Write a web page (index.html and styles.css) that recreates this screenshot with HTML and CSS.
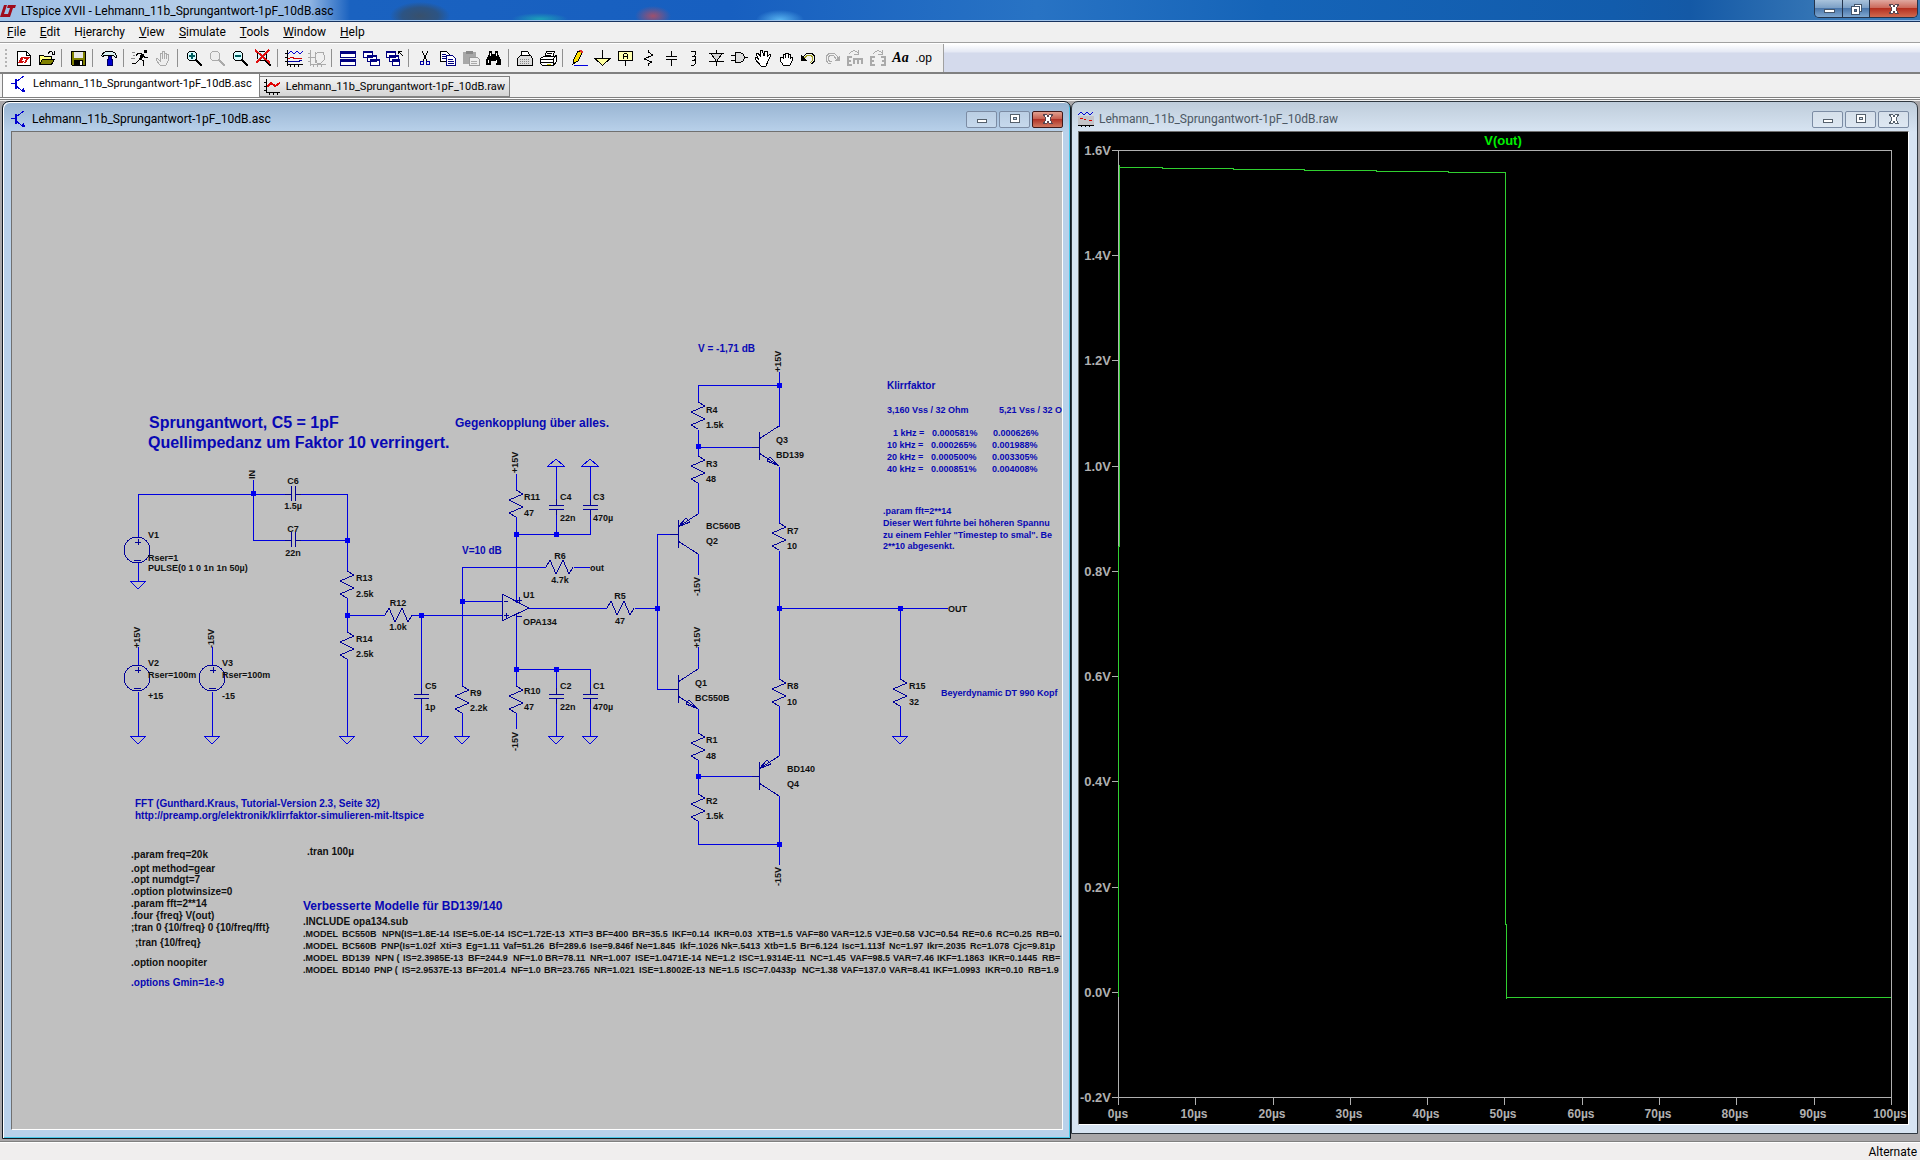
FILE: index.html
```html
<!DOCTYPE html>
<html lang="en">
<head>
<meta charset="utf-8">
<title>LTspice XVII - Lehmann_11b_Sprungantwort-1pF_10dB.asc</title>
<link rel="stylesheet" href="styles.css">
</head>
<body>
<header class="titlebar">
  <svg class="logo" viewBox="0 0 16 12"><path d="M4 0H7L4 9H8L7 12H0ZM8 0H16L15 3H13L10 12H7L10 3H7Z" fill="#a00c1c"/></svg>
  <h1 class="titlebar-text">LTspice XVII - Lehmann_11b_Sprungantwort-1pF_10dB.asc</h1>
  <div class="caption">
    <button class="cap cap-min" aria-label="Minimize"><svg viewBox="0 0 14 12"><path d="M2.500 6.500h10v3h-10z" fill="#fff" stroke="#44566c"/></svg></button>
    <button class="cap cap-restore" aria-label="Restore"><svg viewBox="0 0 14 12"><path d="M5.500 1.500h7v7h-7z" fill="#fff" stroke="#44566c"/><path d="M2.500 3.500h8v8h-8z" fill="#fff" stroke="#44566c"/><path d="M5.500 6.500h2v2h-2z" fill="#5a7ba4" stroke="#44566c"/></svg></button>
    <button class="cap cap-close" aria-label="Close"><svg viewBox="0 0 14 12"><path d="M2.500 1.500h3L7 3.500 8.500 1.500h3L9 6l2.500 4.500h-3L7 8.500 5.500 10.500h-3L5 6z" fill="#fff" stroke="#5a4650"/></svg></button>
  </div>
</header>

<nav class="menubar" aria-label="Main menu">
  <button><u>F</u>ile</button><button><u>E</u>dit</button><button>H<u>i</u>erarchy</button><button><u>V</u>iew</button><button><u>S</u>imulate</button><button><u>T</u>ools</button><button><u>W</u>indow</button><button><u>H</u>elp</button>
</nav>

<div class="toolrow">
  <div class="toolbar" role="toolbar" aria-label="Tools">
    <button aria-label="New schematic"><svg viewBox="0 0 18 18"><path d="M2.500 2.500h9l4 4v10h-13z" fill="#fff" stroke="#000"/><path d="M11.500 2.500v4h4" fill="none" stroke="#000"/><path d="M6 8h3l-2 4h2l-1 2H3zM9 8h6l-1 2h-1l-2 4H9l2-4H9z" fill="#d01010"/></svg></button>
    <button aria-label="Open"><svg viewBox="0 0 18 18"><path d="M1.500 15.500v-9h4l1 1h7v3" fill="#ffff80" stroke="#000"/><path d="M1.500 15.500l3-5h12l-3 5z" fill="#808000" stroke="#000"/><path d="M10 4.500q3-4 5 0M16.500 2v3h-3" fill="none" stroke="#000"/></svg></button>
    <i class="sep"></i>
    <button aria-label="Save"><svg viewBox="0 0 18 18"><path d="M2.500 2.500h14v14h-13l-1-1z" fill="#808000" stroke="#000"/><path d="M5 3h9v6H5z" fill="#e8e8e8"/><path d="M5 11h9v5H5z" fill="#000"/><path d="M11 12h2v4h-2z" fill="#fff"/></svg></button>
    <i class="sep"></i>
    <button aria-label="Control panel"><svg viewBox="0 0 18 18"><path d="M1.500 6.500q2-3 4-4h6q3 0 5 4v2h-1l-2-2h-9l-2 1z" fill="#d8f0f0" stroke="#000"/><path d="M8 7h3v3h1v6H7v-6h1z" fill="#0000d0" stroke="#000060"/></svg></button>
    <i class="sep"></i>
    <button aria-label="Run"><svg viewBox="0 0 18 18"><path d="M13 1h3v3h-3z" fill="#000"/><path d="M10 5h3l-2 6H8z" fill="#000"/><path d="M11 5L7 4 5 7M9 10l4 2-1 5M9 10l-4 4H1M12 6l2 3 3-1" fill="none" stroke="#000"/><path d="M1 3h3M2 6h2M0 9h4" stroke="#888"/></svg></button>
    <button aria-label="Halt" disabled><svg viewBox="0 0 18 18"><path d="M6 16l-4-5q0-2 2-1l2 2V4h2V2h2v2h2v1h2v7l-2 4z" fill="#eee" stroke="#aaa"/><path d="M8 4v6M10 4v6M12 5v5" stroke="#aaa"/></svg></button>
    <i class="sep"></i>
    <button aria-label="Zoom in"><svg viewBox="0 0 18 18"><circle cx="7" cy="7" r="5" fill="#d8fbff" stroke="#000"/><path d="M4 7h6M7 4v6" stroke="#006060" stroke-width="2"/><path d="M11 11l6 6" stroke="#000" stroke-width="2"/></svg></button>
    <button aria-label="Pan" disabled><svg viewBox="0 0 18 18"><circle cx="7" cy="7" r="5" fill="#eee" stroke="#aaa"/><path d="M11 11l6 6" stroke="#aaa" stroke-width="2"/></svg></button>
    <button aria-label="Zoom out"><svg viewBox="0 0 18 18"><circle cx="7" cy="7" r="5" fill="#d8fbff" stroke="#000"/><path d="M4 7h6" stroke="#006060" stroke-width="2"/><path d="M11 11l6 6" stroke="#000" stroke-width="2"/></svg></button>
    <button aria-label="Zoom to fit"><svg viewBox="0 0 18 18"><circle cx="8" cy="7" r="5" fill="#d8fbff" stroke="#000"/><path d="M11 11l6 6" stroke="#000" stroke-width="2"/><path d="M1 1l15 13M15 1L2 14" stroke="#e01010" stroke-width="2"/></svg></button>
    <i class="sep"></i>
    <button aria-label="Autorange"><svg viewBox="0 0 18 18"><path d="M2.500 1v16M0 4.500h2M0 8.500h2M0 12.500h2M2 15.500h16M5.500 15v3M9.500 15v3M13.500 15v3" fill="none" stroke="#000"/><path d="M3 5l3-3 3 3 3-3 3 3 3-3" fill="none" stroke="#0000d0"/><path d="M3 9.500l4-1 3 1h7" fill="none" stroke="#d00000"/><path d="M3 13l5-1 4 1 5-2" fill="none" stroke="#0000a0"/></svg></button>
    <button aria-label="Plot settings" disabled><svg viewBox="0 0 18 18"><path d="M2.500 1v16M0 4.500h2M0 8.500h2M0 12.500h2M2 15.500h16M5.500 15v3M9.500 15v3M13.500 15v3" fill="none" stroke="#aaa"/><path d="M3 8.500h4M7.500 3v11M7 5l4-2h4l1 3v5l-3 3H9l-1-3" fill="none" stroke="#aaa"/></svg></button>
    <i class="sep"></i>
    <button aria-label="Tile windows"><svg viewBox="0 0 18 18"><path d="M1.500 2.500h15v6h-15zM1.500 10.500h15v6h-15z" fill="#fff" stroke="#000080"/><path d="M1 2h16v3H1zM1 10h16v3H1z" fill="#000080"/></svg></button>
    <button aria-label="Cascade windows"><svg viewBox="0 0 18 18"><g fill="#fff" stroke="#000080"><path d="M1.500 2.500h9v6h-9zM5.500 6.500h9v6h-9zM8.500 10.500h9v6h-9z"/></g><path d="M1 2h10v2H1zM5 6h10v2H5zM8 10h10v2H8z" fill="#000080"/></svg></button>
    <button aria-label="Close windows"><svg viewBox="0 0 18 18"><g fill="#fff" stroke="#000080"><path d="M1.500 2.500h9v6h-9zM4.500 6.500h9v6h-9zM7.500 10.500h7v6h-7z"/></g><path d="M1 2h10v2H1zM4 6h10v2H4zM7 10h8v2H7z" fill="#000080"/><path d="M13.500 5V2.500H17M14 3l4 4" fill="none" stroke="#000"/></svg></button>
    <i class="sep"></i>
    <button aria-label="Cut"><svg viewBox="0 0 18 18"><path d="M6 2l5 10M12 2L7 12" stroke="#000" fill="none"/><circle cx="6" cy="14" r="2" fill="none" stroke="#0000a0"/><circle cx="12" cy="14" r="2" fill="none" stroke="#0000a0"/></svg></button>
    <button aria-label="Copy"><svg viewBox="0 0 18 18"><path d="M1.500 2.500h6l3 3v7h-9z" fill="#fff" stroke="#000"/><path d="M3 5.500h4M3 7.500h4M3 9.500h4" stroke="#000080"/><path d="M7.500 6.500h6l3 3v7h-9z" fill="#fff" stroke="#000080"/><path d="M9 10.500h5M9 12.500h6M9 14.500h6" stroke="#000080"/></svg></button>
    <button aria-label="Paste" disabled><svg viewBox="0 0 18 18"><path d="M1 3h13v12H1z" fill="#a8a8a8"/><path d="M4 2h7v3H4z" fill="#888"/><path d="M7.500 8.500h8l2 2v6h-10z" fill="#eee" stroke="#999"/><path d="M9 12.500h6M9 14.500h6" stroke="#aaa"/></svg></button>
    <button aria-label="Find"><svg viewBox="0 0 18 18"><path d="M4 2h3v3h3V2h3v3l3 6v5h-5v-4H6v4H1v-5l3-6z" fill="#000"/><path d="M3.500 11v3M11.500 11v3M5.500 4v3M11.500 4v3" stroke="#fff"/></svg></button>
    <i class="sep"></i>
    <button aria-label="Print setup"><svg viewBox="0 0 18 18"><path d="M5.500 7.500v-5h6l2 3v2" fill="#fff" stroke="#000"/><path d="M1.500 9.500l3-3h10l2 3v7h-15z" fill="#ddd" stroke="#000"/><path d="M4 10.500h10M4 12.500h10M4 14.500h10" stroke="#888" stroke-dasharray="1 1"/></svg></button>
    <button aria-label="Print"><svg viewBox="0 0 18 18"><path d="M5.500 8.500l2-6h8l-2 6" fill="#fff" stroke="#000"/><path d="M8 4.500h5M7 6.500h5" stroke="#000"/><path d="M1.500 9.500l3-2h11l2-1v6l-3 4h-11l-2-2z" fill="#fff" stroke="#000"/><path d="M2 10.500h12v6M2 13.500h12M14 10l3-3" fill="none" stroke="#000"/><path d="M8 15h4" stroke="#c0c000"/></svg></button>
    <i class="sep"></i>
    <button aria-label="Wire"><svg viewBox="0 0 18 18"><path d="M3 15l1-5 4-8h3l1 2-4 8z" fill="#ffe000" stroke="#000"/><path d="M2 16l2-3 2 1z" fill="#000"/><path d="M9 1h3l1 2-1 1-3-2z" fill="#e03030"/><path d="M4 16.500h14" stroke="#0000e0"/></svg></button>
    <button aria-label="Ground"><svg viewBox="0 0 18 18"><path d="M9.500 1v8" stroke="#000"/><path d="M2 9.500h15l-7.500 7z" fill="#ffffa0" stroke="#000"/></svg></button>
    <button aria-label="Label net"><svg viewBox="0 0 18 18"><path d="M2.500 2.500h14v9h-14z" fill="#ffffb0" stroke="#000"/><path d="M9.500 12v5" stroke="#000"/><path d="M7.500 10V5.500l1-1h2l1 1V10M7.500 7.500h4" fill="none" stroke="#000"/></svg></button>
    <button aria-label="Resistor"><svg viewBox="0 0 18 18"><path d="M9 1v2l5 3-9 4 8 3-4 2v2" fill="none" stroke="#000"/></svg></button>
    <button aria-label="Capacitor"><svg viewBox="0 0 18 18"><path d="M9.500 2v5M9.500 11v6M4 7.500h11M4 10.500h11" fill="none" stroke="#000"/></svg></button>
    <button aria-label="Inductor"><svg viewBox="0 0 18 18"><path d="M6 2h3q4 2 0 5H7M9 7q4 2 0 4H7M9 11q4 2 0 5H6" fill="none" stroke="#000"/></svg></button>
    <button aria-label="Diode"><svg viewBox="0 0 18 18"><path d="M1 4.500h15M1 12.500h15M8.500 1v3M8.500 12v5" stroke="#000"/><path d="M3 4.500h11l-5.500 8z" fill="#d4d4d4" stroke="#000"/></svg></button>
    <button aria-label="Component"><svg viewBox="0 0 18 18"><path d="M0 6.500h4M0 11.500h4M13 8.500h4" stroke="#000"/><path d="M4.500 3.500h5l3 2 1 3-1 3-3 2h-5z" fill="#ddd" stroke="#000"/></svg></button>
    <button aria-label="Move"><svg viewBox="0 0 18 18"><path d="M7 17l-6-7q0-2 2-1l2 2-3-6 2-1 3 4-1-6 2-1 2 6 1-5h2v6l3-3 1 1-3 6-2 5z" fill="#fff" stroke="#000"/></svg></button>
    <button aria-label="Drag"><svg viewBox="0 0 18 18"><path d="M6 16l-3-5V8l3 1V5h2v2-3h3v3-2h2v3h2v4l-2 4z" fill="#fff" stroke="#000"/><path d="M8.500 5v4M11.500 5v4M13.500 7v3" stroke="#000"/></svg></button>
    <button aria-label="Undo"><svg viewBox="0 0 18 18"><path d="M3 9q2-5 7-5 5 1 5 6-1 4-4 5" fill="none" stroke="#000"/><path d="M4 10q2-4 6-4 3 1 3 4-1 3-3 4" fill="none" stroke="#a0a020"/><path d="M1 6v6h6z" fill="#000"/></svg></button>
    <button aria-label="Redo" disabled><svg viewBox="0 0 18 18"><path d="M15 9q-2-5-7-5-5 1-5 6 1 5 5 5" fill="none" stroke="#aaa"/><path d="M13 10q-2-4-5-4-3 1-3 4 1 3 4 3" fill="none" stroke="#aaa"/><path d="M17 6v6h-6z" fill="#aaa"/></svg></button>
    <button aria-label="Mirror" disabled><svg viewBox="0 0 18 18"><path d="M3 5q5-6 9-1M12.500 1v4H8" fill="none" stroke="#aaa"/><path d="M6 8H2v8h4M2 12h3M8 9v6M8 10h9M12 10v5M16 10v5" fill="none" stroke="#aaa" stroke-width="2"/></svg></button>
    <button aria-label="Rotate" disabled><svg viewBox="0 0 18 18"><path d="M4 5q5-6 9-1M13.500 1v4H9" fill="none" stroke="#aaa"/><path d="M6 8H2v8h4M2 12h3M12 8h4v8h-4M16 12h-3" fill="none" stroke="#aaa" stroke-width="2"/></svg></button>
    <button class="tool-text" aria-label="Text">Aa</button>
    <button class="tool-op" aria-label="SPICE directive">.op</button>
  </div>
</div>

<div class="tabs" role="tablist">
  <button class="tab tab-active" role="tab" aria-selected="true"><svg class="ico" viewBox="0 0 16 16"><path d="M0 7h4M13 0L5 6M5 10l8 6" stroke="#0000d0" fill="none"/><path d="M4 3h2v10H4zM9 15l5 1-1-4z" fill="#0000d0"/></svg>Lehmann_11b_Sprungantwort-1pF_10dB.asc</button>
  <button class="tab" role="tab" aria-selected="false"><svg class="ico" viewBox="0 0 16 16"><path d="M2.500 0v14M0 3.500h2M0 7.500h2M0 11.500h2M2 13.500h14M5.500 13v3M9.500 13v3M13.500 13v3" stroke="#000" fill="none"/><path d="M3 8l4-4 4 3 5-3" stroke="#e00000" stroke-width="2" fill="none"/></svg>Lehmann_11b_Sprungantwort-1pF_10dB.raw</button>
</div>

<main class="mdi">
  <section class="win win-active">
    <header class="win-title">
      <svg class="ico" viewBox="0 0 16 16"><path d="M0 7h4M13 0L5 6M5 10l8 6" stroke="#0000d0" fill="none"/><path d="M4 3h2v10H4zM9 15l5 1-1-4z" fill="#0000d0"/></svg>
      <h2>Lehmann_11b_Sprungantwort-1pF_10dB.asc</h2>
      <button class="wbtn" aria-label="Minimize"><svg viewBox="0 0 14 12"><path d="M2.500 6.500h9v3h-9z" fill="#fff" stroke="#55606c"/></svg></button>
      <button class="wbtn" aria-label="Maximize"><svg viewBox="0 0 14 12"><path d="M2.500 1.500h9v8h-9z" fill="#fff" stroke="#55606c"/><path d="M5.500 4.500h3v2h-3z" fill="#b9d1ea" stroke="#55606c"/></svg></button>
      <button class="wbtn wbtn-close" aria-label="Close"><svg viewBox="0 0 14 12"><path d="M2.500 1.500h3L7 3.500 8.500 1.500h3L9 6l2.500 4.500h-3L7 8.500 5.500 10.500h-3L5 6z" fill="#fff" stroke="#5a4650"/></svg></button>
    </header>
    <div class="client schematic">
      <svg role="img" aria-label="Schematic">
        <defs>
          <path id="res" d="M0 0L7 4L-7 10L7 17L-7 23L0 27"/>
          <path id="cap" d="M-7 0H8M-7 4H8M0 -6V0M0 4V10"/>
          <path id="gnd" d="M-8 0H8L0 8Z"/>
          <path id="rail" d="M-8 0H8L0 -7Z"/>
          <g id="src"><circle r="13"/><path d="M-2 -8H4M1 -11V-5M-3 10H4"/></g>
          <path id="npn" d="M0 -14V14M0 -7L20 -20M0 7L20 20L8 15L11 11L20 20"/>
          <path id="pnp" d="M0 -14V14M0 7L20 20M20 -20L0 -7L8 -16L12 -12L0 -7"/>
        </defs>
        <g transform="translate(-12 -133)">
          <path class="wire" d="M138 538V495H285M301 495H347V572M253 481V541H285M301 541H347M138 564V582M347 599V633M347 660V737M347 616H385M412 616H502M421 616V689M421 705V737
            M546 568H462V687M462 714V737M574 568H590M462 602H502M516 475V491M516 518V604M516 614V687M516 714V730M516 535H590V516M590 500V467M556 535V516M556 500V467M516 670H590V689M590 705V737M556 670V689M556 705V737
            M529 609H607M635 609H657M670 535H657V690H670M698 403V386H779M698 431V457M698 484V515M698 555V576M698 648V670M698 710V734M698 761V795M698 822V845H779M698 448H752M698 777H752
            M779 373V428M779 468V524M779 552V680M779 707V757M779 797V866M779 609H948M900 609V680M900 707V737M138 648V666M138 693V737M212 648V666M212 693V737"/>
          <g class="part">
            <use href="#res" x="347" y="572"/><use href="#res" x="347" y="633"/><use href="#res" x="516" y="491"/><use href="#res" x="516" y="687"/><use href="#res" x="462" y="687"/><use href="#res" x="698" y="403"/><use href="#res" x="698" y="457"/><use href="#res" x="779" y="524"/><use href="#res" x="779" y="680"/><use href="#res" x="698" y="734"/><use href="#res" x="698" y="795"/><use href="#res" x="900" y="680"/>
            <use href="#res" transform="translate(385 616) rotate(-90)"/><use href="#res" transform="translate(546 568) rotate(-90)"/><use href="#res" transform="translate(607 609) rotate(-90)"/>
            <use href="#cap" x="556" y="506"/><use href="#cap" x="590" y="506"/><use href="#cap" x="556" y="695"/><use href="#cap" x="590" y="695"/><use href="#cap" x="421" y="695"/>
            <use href="#cap" transform="translate(291 495) rotate(-90)"/><use href="#cap" transform="translate(291 541) rotate(-90)"/>
            <use href="#src" x="137" y="551"/><use href="#src" x="137" y="679"/><use href="#src" x="212" y="679"/>
            <use href="#pnp" x="678" y="535"/><use href="#npn" x="678" y="690"/><use href="#npn" x="759" y="447"/><use href="#pnp" x="759" y="777"/>
            <path d="M670 535H678M670 690H678M752 448H759M752 777H759M502 595V622L529 609ZM504 602H508M504 616H509M506 614V619M517 601H522M519 598V604M516 617H522"/>
          </g>
          <g class="flag">
            <use href="#gnd" x="138" y="582"/><use href="#gnd" x="138" y="737"/><use href="#gnd" x="212" y="737"/><use href="#gnd" x="347" y="737"/><use href="#gnd" x="421" y="737"/><use href="#gnd" x="462" y="737"/><use href="#gnd" x="556" y="737"/><use href="#gnd" x="590" y="737"/><use href="#gnd" x="900" y="737"/><use href="#rail" x="556" y="467"/><use href="#rail" x="590" y="467"/>
          </g>
          <path class="node" d="M251 492h5v5h-5zM345 539h5v5h-5zM345 614h5v5h-5zM419 614h5v5h-5zM460 600h5v5h-5zM514 533h5v5h-5zM554 533h5v5h-5zM514 668h5v5h-5zM554 668h5v5h-5zM655 607h5v5h-5zM696 445h5v5h-5zM777 384h5v5h-5zM777 607h5v5h-5zM898 607h5v5h-5zM696 775h5v5h-5zM777 843h5v5h-5z"/>
          <g class="label">
            <text x="148" y="539">V1</text><text x="148" y="562">Rser=1</text><text x="148" y="572">PULSE(0 1 0 1n 1n 50µ)</text>
            <text x="148" y="667">V2</text><text x="148" y="679">Rser=100m</text><text x="148" y="700">+15</text>
            <text x="222" y="667">V3</text><text x="222" y="679">Rser=100m</text><text x="222" y="700">-15</text>
            <text x="356" y="582">R13</text><text x="356" y="598">2.5k</text><text x="356" y="643">R14</text><text x="356" y="658">2.5k</text>
            <text x="524" y="501">R11</text><text x="524" y="517">47</text><text x="560" y="501">C4</text><text x="560" y="522">22n</text><text x="593" y="501">C3</text><text x="593" y="522">470µ</text>
            <text x="590" y="572">out</text><text x="523" y="599">U1</text><text x="523" y="626">OPA134</text>
            <text x="425" y="690">C5</text><text x="425" y="711">1p</text><text x="470" y="697">R9</text><text x="470" y="712">2.2k</text><text x="524" y="695">R10</text><text x="524" y="711">47</text>
            <text x="560" y="690">C2</text><text x="560" y="711">22n</text><text x="593" y="690">C1</text><text x="593" y="711">470µ</text>
            <text x="706" y="414">R4</text><text x="706" y="429">1.5k</text><text x="706" y="468">R3</text><text x="706" y="483">48</text><text x="776" y="444">Q3</text><text x="776" y="459">BD139</text>
            <text x="706" y="530">BC560B</text><text x="706" y="545">Q2</text><text x="787" y="535">R7</text><text x="787" y="550">10</text><text x="695" y="687">Q1</text><text x="695" y="702">BC550B</text>
            <text x="787" y="690">R8</text><text x="787" y="706">10</text><text x="706" y="744">R1</text><text x="706" y="760">48</text><text x="706" y="805">R2</text><text x="706" y="820">1.5k</text>
            <text x="787" y="773">BD140</text><text x="787" y="788">Q4</text><text x="948" y="613">OUT</text><text x="909" y="690">R15</text><text x="909" y="706">32</text>
            <g class="mid">
              <text x="293" y="485">C6</text><text x="293" y="510">1.5µ</text><text x="293" y="533">C7</text><text x="293" y="557">22n</text><text x="398" y="607">R12</text><text x="398" y="631">1.0k</text><text x="560" y="560">R6</text><text x="560" y="584">4.7k</text><text x="620" y="600">R5</text><text x="620" y="625">47</text>
            </g>
            <text transform="translate(518 474) rotate(-90)">+15V</text><text transform="translate(518 752) rotate(-90)">-15V</text><text transform="translate(140 649) rotate(-90)">+15V</text><text transform="translate(214 649) rotate(-90)">-15V</text><text transform="translate(255 480) rotate(-90)">IN</text>
            <text transform="translate(781 373) rotate(-90)">+15V</text><text transform="translate(700 597) rotate(-90)">-15V</text><text transform="translate(700 649) rotate(-90)">+15V</text><text transform="translate(781 887) rotate(-90)">-15V</text>
            <text y="938"><tspan x="303">.MODEL </tspan><tspan x="342">BC550B </tspan><tspan x="382">NPN(IS=1.8E-14 </tspan><tspan x="453">ISE=5.0E-14 </tspan><tspan x="508">ISC=1.72E-13 </tspan><tspan x="569">XTI=3 </tspan><tspan x="596">BF=400 </tspan><tspan x="632">BR=35.5 </tspan><tspan x="672">IKF=0.14 </tspan><tspan x="714">IKR=0.03 </tspan><tspan x="757">XTB=1.5 </tspan><tspan x="796">VAF=80 </tspan><tspan x="831">VAR=12.5 </tspan><tspan x="875">VJE=0.58 </tspan><tspan x="918">VJC=0.54 </tspan><tspan x="962">RE=0.6 </tspan><tspan x="996">RC=0.25 </tspan><tspan x="1036">RB=0.</tspan></text>
            <text y="950"><tspan x="303">.MODEL </tspan><tspan x="342">BC560B </tspan><tspan x="381">PNP(Is=1.02f </tspan><tspan x="440">Xti=3 </tspan><tspan x="466">Eg=1.11 </tspan><tspan x="503">Vaf=51.26 </tspan><tspan x="549">Bf=289.6 </tspan><tspan x="590">Ise=9.846f </tspan><tspan x="636">Ne=1.845 </tspan><tspan x="680">Ikf=.1026 </tspan><tspan x="721">Nk=.5413 </tspan><tspan x="764">Xtb=1.5 </tspan><tspan x="800">Br=6.124 </tspan><tspan x="842">Isc=1.113f </tspan><tspan x="889">Nc=1.97 </tspan><tspan x="927">Ikr=.2035 </tspan><tspan x="970">Rc=1.078 </tspan><tspan x="1013">Cjc=9.81p</tspan></text>
            <text y="962"><tspan x="303">.MODEL </tspan><tspan x="342">BD139 </tspan><tspan x="375">NPN ( </tspan><tspan x="403">IS=2.3985E-13 </tspan><tspan x="468">BF=244.9 </tspan><tspan x="513">NF=1.0 </tspan><tspan x="545">BR=78.11 </tspan><tspan x="590">NR=1.007 </tspan><tspan x="635">ISE=1.0471E-14 </tspan><tspan x="705">NE=1.2 </tspan><tspan x="739">ISC=1.9314E-11 </tspan><tspan x="810">NC=1.45 </tspan><tspan x="850">VAF=98.5 </tspan><tspan x="893">VAR=7.46 </tspan><tspan x="937">IKF=1.1863 </tspan><tspan x="989">IKR=0.1445 </tspan><tspan x="1042">RB=</tspan></text>
            <text y="974"><tspan x="303">.MODEL </tspan><tspan x="342">BD140 </tspan><tspan x="374">PNP ( </tspan><tspan x="402">IS=2.9537E-13 </tspan><tspan x="466">BF=201.4 </tspan><tspan x="511">NF=1.0 </tspan><tspan x="544">BR=23.765 </tspan><tspan x="594">NR=1.021 </tspan><tspan x="639">ISE=1.8002E-13 </tspan><tspan x="709">NE=1.5 </tspan><tspan x="743">ISC=7.0433p </tspan><tspan x="802">NC=1.38 </tspan><tspan x="841">VAF=137.0 </tspan><tspan x="889">VAR=8.41 </tspan><tspan x="933">IKF=1.0993 </tspan><tspan x="985">IKR=0.10 </tspan><tspan x="1028">RB=1.9</tspan></text>
          </g>
          <g class="directive">
            <text x="131" y="859">.param freq=20k</text><text x="131" y="873">.opt method=gear</text><text x="131" y="884">.opt numdgt=7</text><text x="131" y="896">.option plotwinsize=0</text><text x="131" y="908">.param fft=2**14</text><text x="131" y="920">.four {freq} V(out)</text><text x="131" y="932">;tran 0 {10/freq} 0 {10/freq/fft}</text><text x="135" y="947">;tran {10/freq}</text><text x="131" y="967">.option noopiter</text>
            <text x="307" y="856">.tran 100µ</text><text x="303" y="926">.INCLUDE opa134.sub</text>
          </g>
          <g class="note">
            <text x="131" y="987">.options Gmin=1e-9</text>
            <text x="135" y="808">FFT (Gunthard.Kraus, Tutorial-Version 2.3, Seite 32)</text><text x="135" y="820">http://preamp.org/elektronik/klirrfaktor-simulieren-mit-ltspice</text>
            <text x="698" y="353">V = -1,71 dB</text><text x="462" y="555">V=10 dB</text>
            <text x="887" y="390">Klirrfaktor</text>
          </g>
          <g class="note figures">
            <text x="883" y="515">.param fft=2**14</text><text x="883" y="527">Dieser Wert führte bei höheren Spannu</text><text x="883" y="539">zu einem Fehler "Timestep to smal". Be</text><text x="883" y="550">2**10 abgesenkt.</text>
            <text x="941" y="697">Beyerdynamic DT 990 Kopf</text>
            <text x="887" y="414">3,160 Vss / 32 Ohm</text><text x="999" y="414">5,21 Vss / 32 O</text>
            <text x="893" y="437">1 kHz =</text><text x="932" y="437">0.000581%</text><text x="993" y="437">0.000626%</text>
            <text x="887" y="449">10 kHz =</text><text x="931" y="449">0.000265%</text><text x="992" y="449">0.001988%</text>
            <text x="887" y="461">20 kHz =</text><text x="931" y="461">0.000500%</text><text x="992" y="461">0.003305%</text>
            <text x="887" y="473">40 kHz =</text><text x="931" y="473">0.000851%</text><text x="992" y="473">0.004008%</text>
          </g>
          <g class="note heading"><text x="149" y="429">Sprungantwort, C5 = 1pF</text><text x="148" y="449">Quellimpedanz um Faktor 10 verringert.</text></g>
          <g class="note subheading"><text x="455" y="428">Gegenkopplung über alles.</text><text x="303" y="911">Verbesserte Modelle für BD139/140</text></g>
        </g>
      </svg>
    </div>
  </section>

  <section class="win win-back">
    <header class="win-title">
      <svg class="ico" viewBox="0 0 16 16"><path d="M0 5h16v9H0z" fill="#c4c4c8"/><path d="M0 4l3-3 3 3 3-3 3 3 3-3" stroke="#0000d0" fill="none"/><path d="M2 7.500h3M6 8.500h2M11 9.500h3" stroke="#e00000"/><path d="M0 14h16M3.500 14v2M7.500 14v2M11.500 14v2" stroke="#000"/></svg>
      <h2>Lehmann_11b_Sprungantwort-1pF_10dB.raw</h2>
      <button class="wbtn" aria-label="Minimize"><svg viewBox="0 0 14 12"><path d="M2.500 6.500h9v3h-9z" fill="#fff" stroke="#55606c"/></svg></button>
      <button class="wbtn" aria-label="Maximize"><svg viewBox="0 0 14 12"><path d="M2.500 1.500h9v8h-9z" fill="#fff" stroke="#55606c"/><path d="M5.500 4.500h3v2h-3z" fill="#d7e4f2" stroke="#55606c"/></svg></button>
      <button class="wbtn" aria-label="Close"><svg viewBox="0 0 14 12"><path d="M2.500 1.500h3L7 3.500 8.500 1.500h3L9 6l2.500 4.500h-3L7 8.500 5.500 10.500h-3L5 6z" fill="#fff" stroke="#55606c"/></svg></button>
    </header>
    <div class="client plot">
      <svg role="img" aria-label="V(out) over time">
        <g transform="translate(-1079 -133)">
          <path class="axis" d="M1118 151H1891V1098H1118ZM1112 151h6M1112 256h6M1112 361h6M1112 467h6M1112 572h6M1112 677h6M1112 782h6M1112 888h6M1112 993h6M1112 1098h6M1118 1098v8M1195 1098v8M1273 1098v8M1350 1098v8M1427 1098v8M1504 1098v8M1582 1098v8M1659 1098v8M1736 1098v8M1814 1098v8M1891 1098v8"/>
          <path class="trace" d="M1118 998V547H1119V166M1119 168H1162V169H1233V170H1304V171H1376V172H1448V173H1505V925H1506V1000V998H1891"/>
          <text class="trace-name" x="1503" y="146">V(out)</text>
          <g class="ylab">
            <text x="1111" y="156">1.6V</text><text x="1111" y="261">1.4V</text><text x="1111" y="366">1.2V</text><text x="1111" y="472">1.0V</text><text x="1111" y="577">0.8V</text><text x="1111" y="682">0.6V</text><text x="1111" y="787">0.4V</text><text x="1111" y="893">0.2V</text><text x="1111" y="998">0.0V</text><text x="1111" y="1103">-0.2V</text>
          </g>
          <g class="xlab">
            <text x="1118" y="1119">0µs</text><text x="1194" y="1119">10µs</text><text x="1272" y="1119">20µs</text><text x="1349" y="1119">30µs</text><text x="1426" y="1119">40µs</text><text x="1503" y="1119">50µs</text><text x="1581" y="1119">60µs</text><text x="1658" y="1119">70µs</text><text x="1735" y="1119">80µs</text><text x="1813" y="1119">90µs</text><text x="1890" y="1119">100µs</text>
          </g>
        </g>
      </svg>
    </div>
  </section>
</main>

<footer class="status">Alternate</footer>
</body>
</html>
```
FILE: styles.css
```css
* { box-sizing: border-box; }
body {
  margin: 0;
  height: 100vh;
  display: flex;
  flex-direction: column;
  overflow: hidden;
  background: #f0f0f0;
  color: #000;
  font: 12px/16px Roboto, "Noto Sans", sans-serif;
}
button { font: inherit; color: inherit; border: 0; padding: 0; margin: 0; background: none; }
h1, h2 { margin: 0; font: inherit; }
svg { display: block; shape-rendering: crispEdges; }

/* main title bar */
.titlebar {
  height: 22px;
  flex: none;
  display: flex;
  align-items: flex-start;
  padding: 0 2px 0 0;
  border-bottom: 1px solid #17335f;
  box-shadow: inset 0 -1px #9fc3ea;
  background:
    radial-gradient(ellipse 24px 10px at 780px 20px, #58b4f0, transparent),
    radial-gradient(ellipse 18px 10px at 653px 16px, #a0506c, transparent),
    radial-gradient(ellipse 28px 6px at 540px 19px, #1ca0b8, transparent),
    radial-gradient(ellipse 30px 14px at 420px 16px, #38506c, #2c5484 60%, transparent),
    linear-gradient(90deg, #9dbfe6 0, #b4cde8 180px, #8fb4e2 310px, #1a62c0 350px, #175fc0 38%, #2873c4 54%, #1564b8 66%, #125cac 84%, #1459a6 88%, #3a7ab8 96%);
}
.logo { width: 16px; height: 12px; margin: 5px 5px 0 0; shape-rendering: auto; }
.titlebar-text { flex: 1; line-height: 22px; }
.caption { display: flex; height: 18px; border: 1px solid #24344c; border-top: 0; border-radius: 0 0 5px 5px; overflow: hidden; }
.cap { display: flex; align-items: center; justify-content: center; width: 27px; background: linear-gradient(#a9c3dc, #7da0c6 45%, #4b77ab 50%, #7fa7d0); }
.cap + .cap { border-left: 1px solid #24344c; }
.cap svg, .wbtn svg { width: 14px; height: 12px; }
.cap-close { width: 48px; background: linear-gradient(#e0a8a0, #cc6a5c 45%, #b53020 50%, #d06a50); }

.menubar { height: 21px; flex: none; display: flex; border-bottom: 1px solid #a0a0a0; }
.menubar button { padding: 0 7px; line-height: 20px; }

/* toolbar */
.toolrow { height: 31px; flex: none; display: flex; border-top: 1px solid #fff; border-bottom: 2px solid #808080; background: linear-gradient(#fff, #e4e8f4 8px, #d4daec 9px); }
.toolbar { position: relative; display: flex; padding: 0 8px 0 12px; background: #f0f0f0; border-right: 1px solid #a0a0a0; }
.toolbar::before { content: ""; position: absolute; left: 5px; top: 5px; bottom: 5px; border-left: 2px dotted #b4b4b4; }
.toolbar button { width: 23px; display: flex; align-items: center; justify-content: center; }
.toolbar svg { width: 18px; height: 18px; }
.sep { width: 8px; margin: 5px 0; background: linear-gradient(#909090, #909090) 3px 0 / 1px 100% no-repeat; }
.toolbar .tool-text { font: italic bold 14px "Liberation Serif", serif; }
.toolbar .tool-op { font: 12px "Liberation Sans", sans-serif; }

/* document tabs */
.tabs { height: 24px; flex: none; display: flex; align-items: flex-end; padding-left: 2px; border-bottom: 1px solid #808080; box-shadow: 0 1px #fff, 0 2px #808080; margin-bottom: 3px; font-size: 11px; }
.tab { display: flex; align-items: center; gap: 6px; height: 21px; padding: 0 4px; border: 1px solid #808080; border-left: 0; background: linear-gradient(#f4f4f4, #d4d4d4); }
.tab-active { height: 24px; padding: 0 7px 3px 8px; background: #fff; border-left: 1px solid #808080; border-bottom: 0; }
.ico { width: 16px; height: 16px; flex: none; }

/* child windows */
.mdi { flex: 1; min-height: 0; display: grid; grid-template-columns: 1069fr 847fr; padding: 0 2px 2px; background: #a9a7a9; }
.win { display: flex; flex-direction: column; min-width: 0; min-height: 0; border: 1px solid #303840; border-radius: 7px 7px 0 0; }
.win-active { border-color: #101820; background: linear-gradient(#98b4d2, #b9d1ea 30px); box-shadow: inset 1px 1px #fff, inset -1px -1px #48c8e8; padding: 0 7px 8px 8px; }
.win-back { margin-bottom: 5px; background: linear-gradient(#bfcddb, #d7e4f2 30px); color: #4c5864; padding: 0 8px 8px 6px; }
.win-title { height: 29px; flex: none; display: flex; align-items: center; padding-top: 5px; gap: 2px; }
.win-title h2 { flex: 1; padding-left: 3px; line-height: 16px; }
.wbtn { width: 31px; height: 17px; display: flex; align-items: center; justify-content: center; border: 1px solid #7c8ca4; border-radius: 2px; background: rgba(255, 255, 255, .25); }
.wbtn-close { border-color: #401818; background: linear-gradient(#e0a090, #c86050 45%, #b03428 50%, #d07860); }
.client { flex: 1; min-height: 0; overflow: hidden; border: 1px solid #707070; border-right-color: #fff; border-bottom-color: #fff; }
.client svg { width: 100%; height: 100%; }
.schematic { background: #c0c0c0; }
.plot { background: #000; }
.client text { font-family: "Liberation Sans", Arial, sans-serif; font-weight: bold; white-space: pre; }

.wire, .flag { fill: none; stroke: #0000e0; }
.part { fill: none; stroke: #000098; }
.node { fill: #0000f0; }
.label { font-size: 9px; fill: #101010; }
.mid, .xlab { text-anchor: middle; }
.directive { font-size: 10px; fill: #101010; }
.note { font-size: 10px; fill: #0808b4; }
.figures { font-size: 9px; }
.heading { font-size: 16px; }
.subheading { font-size: 12px; }

.axis { fill: none; stroke: #b0b0b0; }
.trace { fill: none; stroke: #30d030; }
.trace-name { font-size: 13px; fill: #00f000; text-anchor: middle; }
.ylab { font-size: 13px; fill: #b0b0b0; text-anchor: end; }
.xlab { font-size: 12px; fill: #b0b0b0; }

.status { height: 19px; flex: none; border-top: 1px solid #808080; box-shadow: inset 0 1px #fff; background: #f0eeee; text-align: right; padding: 2px 3px 0; line-height: 16px; }
```
